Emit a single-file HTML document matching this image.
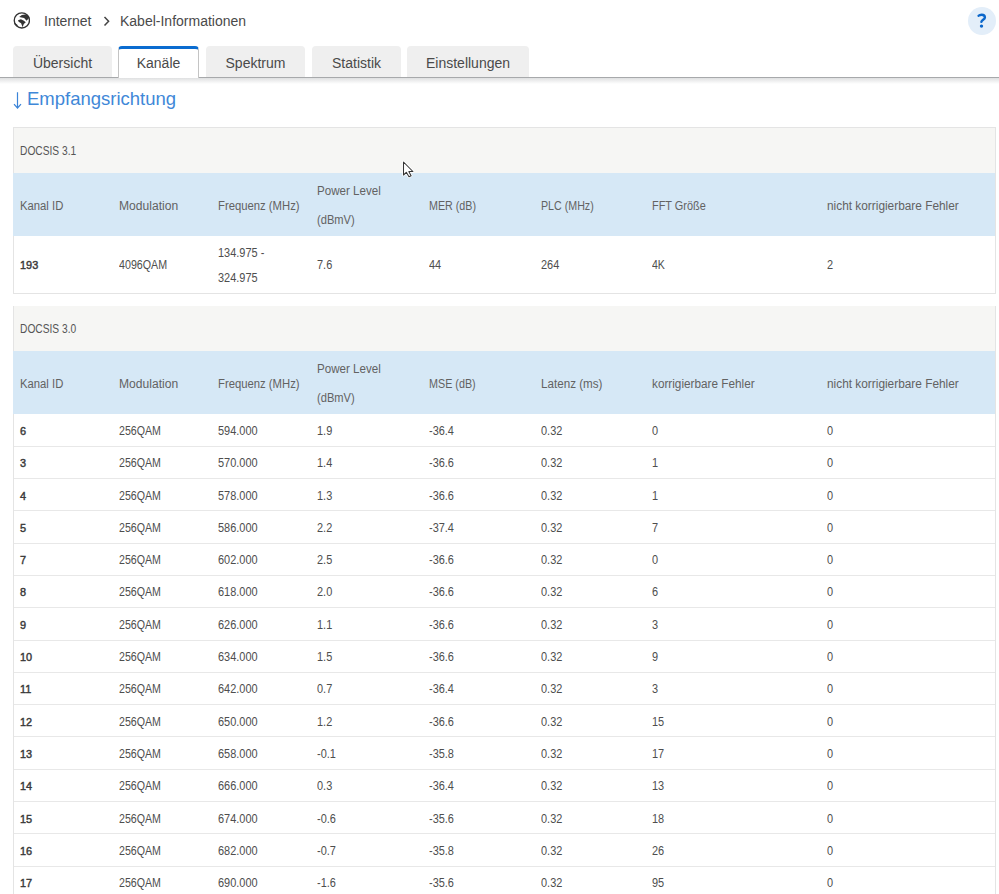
<!DOCTYPE html>
<html><head><meta charset="utf-8">
<style>
*{box-sizing:border-box;margin:0;padding:0}
html,body{width:999px;height:894px;overflow:hidden;background:#fff;font-family:"Liberation Sans",sans-serif;color:#444}
.t{position:absolute;white-space:nowrap;line-height:1;transform-origin:0 0}
.abs{position:absolute;white-space:nowrap;line-height:1}
.globe{position:absolute;left:13px;top:12px;width:17px;height:17px}
.help{position:absolute;left:968px;top:7px;width:28px;height:28px;border-radius:50%;background:#e3effa;color:#0a64c8;font-weight:bold;font-size:19px;text-align:center;line-height:28px}
.tab{position:absolute;top:46px;height:31px;background:#efefef;border-radius:4px 4px 0 0;font-size:14px;color:#4a4a4a;text-align:center;line-height:34px}
.tab.act{background:#fff;border:1px solid #c4c4c4;border-bottom:none;border-top:3px solid #0a6cd0;line-height:28px;height:32px;z-index:2}
#tabline{position:absolute;left:0;top:77px;width:999px;height:1px;background:#a7a9ab}
#shadow{position:absolute;left:0;top:78px;width:999px;height:6px;background:linear-gradient(#dfe0e1,#fff)}
h1{position:absolute;left:27px;top:90px;font-size:18.5px;line-height:1;font-weight:normal;color:#3f88d8;white-space:nowrap}
.box{position:absolute;left:13px;width:983px;border:1px solid #e4e4e4}
.capbg{position:absolute;left:14px;width:981px;height:45px;background:#f6f6f4}
.hdrbg{position:absolute;left:13px;width:982px;height:63px;background:#d6e8f6}
.rl{position:absolute;left:14px;width:981px;height:1px;background:#e8e8e8}
.cap{font-size:12.5px;color:#555}
.h{font-size:12.5px;color:#626262}
.d{font-size:12.5px;color:#4e4e4e}
.b{font-weight:normal;color:#3a3a3a;font-size:11.6px;-webkit-text-stroke:0.45px #3a3a3a}
</style></head><body>
  <svg class="globe" viewBox="0 0 17 17"><circle cx="8.85" cy="8.4" r="7.6" fill="none" stroke="#333" stroke-width="1.35"/><path d="M6.2 5 L8.8 3.1 L12 2.4 L15 3.6 L16.3 5.7 L13.6 8.8 L11.1 6 L8.5 5.6 Z M5 8.3 L7.9 7.3 L10.5 8.4 L12.8 10.2 L10.8 12.1 L9.6 15.3 L8.1 11.2 L5.6 9.8 Z M1.8 10.8 L4.9 13.3 L3.9 14.2 L1.5 12.2 Z" fill="#333"/></svg>
  <div class="abs" style="left:44px;top:14px;font-size:14px;color:#4a4a4a">Internet</div>
  <svg style="position:absolute;left:100px;top:12px" width="14" height="18"><path d="M4.5 5 L8.6 9.3 L4.5 13.6" fill="none" stroke="#444" stroke-width="1.5"/></svg>
  <div class="abs" style="left:120px;top:14px;font-size:14px;color:#4a4a4a">Kabel-Informationen</div>
  <svg style="position:absolute;left:968px;top:7px" width="28" height="28" viewBox="0 0 28 28"><circle cx="14" cy="14" r="14" fill="#e3eef9"/><path d="M10.6 8.8 C11.4 7.9 12.4 7.7 13.7 7.7 C15.6 7.7 16.9 8.8 16.9 10.4 C16.9 12.5 13.7 13 13.4 14.9" fill="none" stroke="#0b67cb" stroke-width="2.4" stroke-linecap="round"/><circle cx="13.5" cy="19.1" r="1.7" fill="#0b67cb"/></svg>
<div class="tab" style="left:13px;width:99px">Übersicht</div>
<div class="tab act" style="left:118px;width:81px">Kanäle</div>
<div class="tab" style="left:206px;width:99px">Spektrum</div>
<div class="tab" style="left:312px;width:89px">Statistik</div>
<div class="tab" style="left:407px;width:122px">Einstellungen</div>
<div id="tabline"></div>
<div id="shadow"></div>
<svg style="position:absolute;left:12px;top:92px" width="12" height="18" viewBox="0 0 12 18"><path d="M5.5 0.2 V15.6 M2 12.2 L5.5 16 L9 12.2" fill="none" stroke="#3b84d8" stroke-width="1.2"/></svg>
<h1>Empfangsrichtung</h1>

<div class="box" style="top:127px;height:167px"></div>
<div class="capbg" style="top:128px;height:45px"></div>
<div class="t cap" style="left:20px;top:145.02px;transform:scaleX(0.8177)">DOCSIS 3.1</div>
<div class="hdrbg" style="top:173px"></div>
<div class="t h" style="left:20px;top:199.72px;transform:scaleX(0.9029)">Kanal ID</div>
<div class="t h" style="left:119px;top:199.72px;transform:scaleX(0.9672)">Modulation</div>
<div class="t h" style="left:218px;top:199.72px;transform:scaleX(0.9029)">Frequenz (MHz)</div>
<div class="t h" style="left:317px;top:185.32px;transform:scaleX(0.9276)">Power Level</div>
<div class="t h" style="left:317px;top:213.92px;transform:scaleX(0.891)">(dBmV)</div>
<div class="t h" style="left:429px;top:199.72px;transform:scaleX(0.8573)">MER (dB)</div>
<div class="t h" style="left:541px;top:199.72px;transform:scaleX(0.8534)">PLC (MHz)</div>
<div class="t h" style="left:652px;top:199.72px;transform:scaleX(0.8742)">FFT Größe</div>
<div class="t h" style="left:827px;top:199.72px;transform:scaleX(0.9484)">nicht korrigierbare Fehler</div>
<div class="t d b" style="left:20px;top:259.12px;transform:scaleX(0.9405)">193</div>
<div class="t d" style="left:119px;top:259.12px;transform:scaleX(0.8544)">4096QAM</div>
<div class="t d" style="left:218px;top:247.12px;transform:scaleX(0.8761)">134.975 -</div>
<div class="t d" style="left:218px;top:272.12px;transform:scaleX(0.8761)">324.975</div>
<div class="t d" style="left:317px;top:259.12px;transform:scaleX(0.8761)">7.6</div>
<div class="t d" style="left:429px;top:259.12px;transform:scaleX(0.8761)">44</div>
<div class="t d" style="left:541px;top:259.12px;transform:scaleX(0.8761)">264</div>
<div class="t d" style="left:652px;top:259.12px;transform:scaleX(0.8445)">4K</div>
<div class="t d" style="left:827px;top:259.12px;transform:scaleX(0.8761)">2</div>
<div class="box" style="top:306px;height:589px;border-top:none"></div>
<div class="capbg" style="top:306px;height:45px"></div>
<div class="t cap" style="left:20px;top:323.12px;transform:scaleX(0.8177)">DOCSIS 3.0</div>
<div class="hdrbg" style="top:351px"></div>
<div class="t h" style="left:20px;top:377.62px;transform:scaleX(0.9029)">Kanal ID</div>
<div class="t h" style="left:119px;top:377.62px;transform:scaleX(0.9672)">Modulation</div>
<div class="t h" style="left:218px;top:377.62px;transform:scaleX(0.9029)">Frequenz (MHz)</div>
<div class="t h" style="left:317px;top:363.32px;transform:scaleX(0.9276)">Power Level</div>
<div class="t h" style="left:317px;top:391.92px;transform:scaleX(0.891)">(dBmV)</div>
<div class="t h" style="left:429px;top:377.62px;transform:scaleX(0.8613)">MSE (dB)</div>
<div class="t h" style="left:541px;top:377.62px;transform:scaleX(0.9316)">Latenz (ms)</div>
<div class="t h" style="left:652px;top:377.62px;transform:scaleX(0.9405)">korrigierbare Fehler</div>
<div class="t h" style="left:827px;top:377.62px;transform:scaleX(0.9484)">nicht korrigierbare Fehler</div>
<div class="t d b" style="left:20px;top:425.02px;transform:scaleX(0.9405)">6</div>
<div class="t d" style="left:119px;top:425.02px;transform:scaleX(0.8504)">256QAM</div>
<div class="t d" style="left:218px;top:425.02px;transform:scaleX(0.8761)">594.000</div>
<div class="t d" style="left:317px;top:425.02px;transform:scaleX(0.8761)">1.9</div>
<div class="t d" style="left:429px;top:425.02px;transform:scaleX(0.8761)">-36.4</div>
<div class="t d" style="left:541px;top:425.02px;transform:scaleX(0.8761)">0.32</div>
<div class="t d" style="left:652px;top:425.02px;transform:scaleX(0.8761)">0</div>
<div class="t d" style="left:827px;top:425.02px;transform:scaleX(0.8761)">0</div>
<div class="rl" style="top:446px"></div>
<div class="t d b" style="left:20px;top:457.31px;transform:scaleX(0.9405)">3</div>
<div class="t d" style="left:119px;top:457.31px;transform:scaleX(0.8504)">256QAM</div>
<div class="t d" style="left:218px;top:457.31px;transform:scaleX(0.8761)">570.000</div>
<div class="t d" style="left:317px;top:457.31px;transform:scaleX(0.8761)">1.4</div>
<div class="t d" style="left:429px;top:457.31px;transform:scaleX(0.8761)">-36.6</div>
<div class="t d" style="left:541px;top:457.31px;transform:scaleX(0.8761)">0.32</div>
<div class="t d" style="left:652px;top:457.31px;transform:scaleX(0.8761)">1</div>
<div class="t d" style="left:827px;top:457.31px;transform:scaleX(0.8761)">0</div>
<div class="rl" style="top:478px"></div>
<div class="t d b" style="left:20px;top:489.60px;transform:scaleX(0.9405)">4</div>
<div class="t d" style="left:119px;top:489.60px;transform:scaleX(0.8504)">256QAM</div>
<div class="t d" style="left:218px;top:489.60px;transform:scaleX(0.8761)">578.000</div>
<div class="t d" style="left:317px;top:489.60px;transform:scaleX(0.8761)">1.3</div>
<div class="t d" style="left:429px;top:489.60px;transform:scaleX(0.8761)">-36.6</div>
<div class="t d" style="left:541px;top:489.60px;transform:scaleX(0.8761)">0.32</div>
<div class="t d" style="left:652px;top:489.60px;transform:scaleX(0.8761)">1</div>
<div class="t d" style="left:827px;top:489.60px;transform:scaleX(0.8761)">0</div>
<div class="rl" style="top:510px"></div>
<div class="t d b" style="left:20px;top:521.89px;transform:scaleX(0.9405)">5</div>
<div class="t d" style="left:119px;top:521.89px;transform:scaleX(0.8504)">256QAM</div>
<div class="t d" style="left:218px;top:521.89px;transform:scaleX(0.8761)">586.000</div>
<div class="t d" style="left:317px;top:521.89px;transform:scaleX(0.8761)">2.2</div>
<div class="t d" style="left:429px;top:521.89px;transform:scaleX(0.8761)">-37.4</div>
<div class="t d" style="left:541px;top:521.89px;transform:scaleX(0.8761)">0.32</div>
<div class="t d" style="left:652px;top:521.89px;transform:scaleX(0.8761)">7</div>
<div class="t d" style="left:827px;top:521.89px;transform:scaleX(0.8761)">0</div>
<div class="rl" style="top:543px"></div>
<div class="t d b" style="left:20px;top:554.18px;transform:scaleX(0.9405)">7</div>
<div class="t d" style="left:119px;top:554.18px;transform:scaleX(0.8504)">256QAM</div>
<div class="t d" style="left:218px;top:554.18px;transform:scaleX(0.8761)">602.000</div>
<div class="t d" style="left:317px;top:554.18px;transform:scaleX(0.8761)">2.5</div>
<div class="t d" style="left:429px;top:554.18px;transform:scaleX(0.8761)">-36.6</div>
<div class="t d" style="left:541px;top:554.18px;transform:scaleX(0.8761)">0.32</div>
<div class="t d" style="left:652px;top:554.18px;transform:scaleX(0.8761)">0</div>
<div class="t d" style="left:827px;top:554.18px;transform:scaleX(0.8761)">0</div>
<div class="rl" style="top:575px"></div>
<div class="t d b" style="left:20px;top:586.47px;transform:scaleX(0.9405)">8</div>
<div class="t d" style="left:119px;top:586.47px;transform:scaleX(0.8504)">256QAM</div>
<div class="t d" style="left:218px;top:586.47px;transform:scaleX(0.8761)">618.000</div>
<div class="t d" style="left:317px;top:586.47px;transform:scaleX(0.8761)">2.0</div>
<div class="t d" style="left:429px;top:586.47px;transform:scaleX(0.8761)">-36.6</div>
<div class="t d" style="left:541px;top:586.47px;transform:scaleX(0.8761)">0.32</div>
<div class="t d" style="left:652px;top:586.47px;transform:scaleX(0.8761)">6</div>
<div class="t d" style="left:827px;top:586.47px;transform:scaleX(0.8761)">0</div>
<div class="rl" style="top:607px"></div>
<div class="t d b" style="left:20px;top:618.76px;transform:scaleX(0.9405)">9</div>
<div class="t d" style="left:119px;top:618.76px;transform:scaleX(0.8504)">256QAM</div>
<div class="t d" style="left:218px;top:618.76px;transform:scaleX(0.8761)">626.000</div>
<div class="t d" style="left:317px;top:618.76px;transform:scaleX(0.8761)">1.1</div>
<div class="t d" style="left:429px;top:618.76px;transform:scaleX(0.8761)">-36.6</div>
<div class="t d" style="left:541px;top:618.76px;transform:scaleX(0.8761)">0.32</div>
<div class="t d" style="left:652px;top:618.76px;transform:scaleX(0.8761)">3</div>
<div class="t d" style="left:827px;top:618.76px;transform:scaleX(0.8761)">0</div>
<div class="rl" style="top:640px"></div>
<div class="t d b" style="left:20px;top:651.05px;transform:scaleX(0.9405)">10</div>
<div class="t d" style="left:119px;top:651.05px;transform:scaleX(0.8504)">256QAM</div>
<div class="t d" style="left:218px;top:651.05px;transform:scaleX(0.8761)">634.000</div>
<div class="t d" style="left:317px;top:651.05px;transform:scaleX(0.8761)">1.5</div>
<div class="t d" style="left:429px;top:651.05px;transform:scaleX(0.8761)">-36.6</div>
<div class="t d" style="left:541px;top:651.05px;transform:scaleX(0.8761)">0.32</div>
<div class="t d" style="left:652px;top:651.05px;transform:scaleX(0.8761)">9</div>
<div class="t d" style="left:827px;top:651.05px;transform:scaleX(0.8761)">0</div>
<div class="rl" style="top:672px"></div>
<div class="t d b" style="left:20px;top:683.34px;transform:scaleX(0.9405)">11</div>
<div class="t d" style="left:119px;top:683.34px;transform:scaleX(0.8504)">256QAM</div>
<div class="t d" style="left:218px;top:683.34px;transform:scaleX(0.8761)">642.000</div>
<div class="t d" style="left:317px;top:683.34px;transform:scaleX(0.8761)">0.7</div>
<div class="t d" style="left:429px;top:683.34px;transform:scaleX(0.8761)">-36.4</div>
<div class="t d" style="left:541px;top:683.34px;transform:scaleX(0.8761)">0.32</div>
<div class="t d" style="left:652px;top:683.34px;transform:scaleX(0.8761)">3</div>
<div class="t d" style="left:827px;top:683.34px;transform:scaleX(0.8761)">0</div>
<div class="rl" style="top:704px"></div>
<div class="t d b" style="left:20px;top:715.63px;transform:scaleX(0.9405)">12</div>
<div class="t d" style="left:119px;top:715.63px;transform:scaleX(0.8504)">256QAM</div>
<div class="t d" style="left:218px;top:715.63px;transform:scaleX(0.8761)">650.000</div>
<div class="t d" style="left:317px;top:715.63px;transform:scaleX(0.8761)">1.2</div>
<div class="t d" style="left:429px;top:715.63px;transform:scaleX(0.8761)">-36.6</div>
<div class="t d" style="left:541px;top:715.63px;transform:scaleX(0.8761)">0.32</div>
<div class="t d" style="left:652px;top:715.63px;transform:scaleX(0.8761)">15</div>
<div class="t d" style="left:827px;top:715.63px;transform:scaleX(0.8761)">0</div>
<div class="rl" style="top:736px"></div>
<div class="t d b" style="left:20px;top:747.92px;transform:scaleX(0.9405)">13</div>
<div class="t d" style="left:119px;top:747.92px;transform:scaleX(0.8504)">256QAM</div>
<div class="t d" style="left:218px;top:747.92px;transform:scaleX(0.8761)">658.000</div>
<div class="t d" style="left:317px;top:747.92px;transform:scaleX(0.8761)">-0.1</div>
<div class="t d" style="left:429px;top:747.92px;transform:scaleX(0.8761)">-35.8</div>
<div class="t d" style="left:541px;top:747.92px;transform:scaleX(0.8761)">0.32</div>
<div class="t d" style="left:652px;top:747.92px;transform:scaleX(0.8761)">17</div>
<div class="t d" style="left:827px;top:747.92px;transform:scaleX(0.8761)">0</div>
<div class="rl" style="top:769px"></div>
<div class="t d b" style="left:20px;top:780.21px;transform:scaleX(0.9405)">14</div>
<div class="t d" style="left:119px;top:780.21px;transform:scaleX(0.8504)">256QAM</div>
<div class="t d" style="left:218px;top:780.21px;transform:scaleX(0.8761)">666.000</div>
<div class="t d" style="left:317px;top:780.21px;transform:scaleX(0.8761)">0.3</div>
<div class="t d" style="left:429px;top:780.21px;transform:scaleX(0.8761)">-36.4</div>
<div class="t d" style="left:541px;top:780.21px;transform:scaleX(0.8761)">0.32</div>
<div class="t d" style="left:652px;top:780.21px;transform:scaleX(0.8761)">13</div>
<div class="t d" style="left:827px;top:780.21px;transform:scaleX(0.8761)">0</div>
<div class="rl" style="top:801px"></div>
<div class="t d b" style="left:20px;top:812.50px;transform:scaleX(0.9405)">15</div>
<div class="t d" style="left:119px;top:812.50px;transform:scaleX(0.8504)">256QAM</div>
<div class="t d" style="left:218px;top:812.50px;transform:scaleX(0.8761)">674.000</div>
<div class="t d" style="left:317px;top:812.50px;transform:scaleX(0.8761)">-0.6</div>
<div class="t d" style="left:429px;top:812.50px;transform:scaleX(0.8761)">-35.6</div>
<div class="t d" style="left:541px;top:812.50px;transform:scaleX(0.8761)">0.32</div>
<div class="t d" style="left:652px;top:812.50px;transform:scaleX(0.8761)">18</div>
<div class="t d" style="left:827px;top:812.50px;transform:scaleX(0.8761)">0</div>
<div class="rl" style="top:833px"></div>
<div class="t d b" style="left:20px;top:844.79px;transform:scaleX(0.9405)">16</div>
<div class="t d" style="left:119px;top:844.79px;transform:scaleX(0.8504)">256QAM</div>
<div class="t d" style="left:218px;top:844.79px;transform:scaleX(0.8761)">682.000</div>
<div class="t d" style="left:317px;top:844.79px;transform:scaleX(0.8761)">-0.7</div>
<div class="t d" style="left:429px;top:844.79px;transform:scaleX(0.8761)">-35.8</div>
<div class="t d" style="left:541px;top:844.79px;transform:scaleX(0.8761)">0.32</div>
<div class="t d" style="left:652px;top:844.79px;transform:scaleX(0.8761)">26</div>
<div class="t d" style="left:827px;top:844.79px;transform:scaleX(0.8761)">0</div>
<div class="rl" style="top:866px"></div>
<div class="t d b" style="left:20px;top:877.08px;transform:scaleX(0.9405)">17</div>
<div class="t d" style="left:119px;top:877.08px;transform:scaleX(0.8504)">256QAM</div>
<div class="t d" style="left:218px;top:877.08px;transform:scaleX(0.8761)">690.000</div>
<div class="t d" style="left:317px;top:877.08px;transform:scaleX(0.8761)">-1.6</div>
<div class="t d" style="left:429px;top:877.08px;transform:scaleX(0.8761)">-35.6</div>
<div class="t d" style="left:541px;top:877.08px;transform:scaleX(0.8761)">0.32</div>
<div class="t d" style="left:652px;top:877.08px;transform:scaleX(0.8761)">95</div>
<div class="t d" style="left:827px;top:877.08px;transform:scaleX(0.8761)">0</div>
<svg style="position:absolute;left:402px;top:161px" width="14" height="18" viewBox="0 0 14 18"><path d="M1.5 1 L1.5 14 L4.3 11.3 L7 15.7 L9.1 14.7 L6.8 10.6 L10.9 10.5 Z" fill="#fff" stroke="#fff" stroke-width="2.6" stroke-linejoin="round"/><path d="M1.5 1 L1.5 14 L4.3 11.3 L7 15.7 L9.1 14.7 L6.8 10.6 L10.9 10.5 Z" fill="#fff" stroke="#353535" stroke-width="1.05" stroke-linejoin="round"/></svg>

</body></html>
